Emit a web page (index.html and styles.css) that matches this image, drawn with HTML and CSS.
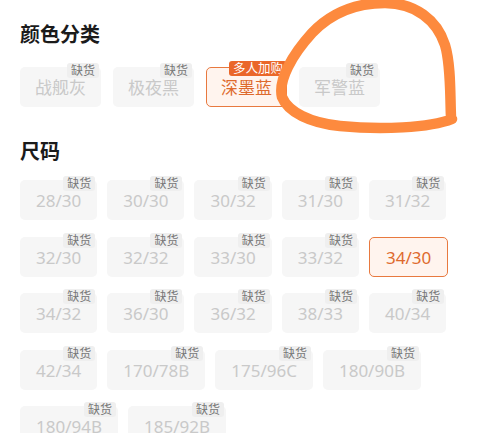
FILE: index.html
```html
<!DOCTYPE html>
<html>
<head>
  <title>选择规格</title>
  <link rel="stylesheet" href="styles.css">
</head>
<body>
  <div class="panel">
    <h2 class="sec-title">颜色分类</h2>
    <div class="chips colors">
      <div class="chip off">战舰灰<span class="tag">缺货</span></div>
      <div class="chip off">极夜黑<span class="tag">缺货</span></div>
      <div class="chip on">深墨蓝<span class="tag hot">多人加购</span></div>
      <div class="chip off">军警蓝<span class="tag">缺货</span></div>
    </div>

    <h2 class="sec-title size-title">尺码</h2>
    <div class="chips sizes">
      <div class="chip off">28/30<span class="tag">缺货</span></div>
      <div class="chip off">30/30<span class="tag">缺货</span></div>
      <div class="chip off">30/32<span class="tag">缺货</span></div>
      <div class="chip off">31/30<span class="tag">缺货</span></div>
      <div class="chip off">31/32<span class="tag">缺货</span></div>
      <div class="chip off">32/30<span class="tag">缺货</span></div>
      <div class="chip off">32/32<span class="tag">缺货</span></div>
      <div class="chip off">33/30<span class="tag">缺货</span></div>
      <div class="chip off">33/32<span class="tag">缺货</span></div>
      <div class="chip on">34/30</div>
      <div class="chip off">34/32<span class="tag">缺货</span></div>
      <div class="chip off">36/30<span class="tag">缺货</span></div>
      <div class="chip off">36/32<span class="tag">缺货</span></div>
      <div class="chip off">38/33<span class="tag">缺货</span></div>
      <div class="chip off">40/34<span class="tag">缺货</span></div>
      <div class="chip off">42/34<span class="tag">缺货</span></div>
      <div class="chip off">170/78B<span class="tag">缺货</span></div>
      <div class="chip off">175/96C<span class="tag">缺货</span></div>
      <div class="chip off">180/90B<span class="tag">缺货</span></div>
      <div class="chip off">180/94B<span class="tag">缺货</span></div>
      <div class="chip off">185/92B<span class="tag">缺货</span></div>
    </div>
  </div>

  <!-- 手绘圈注 -->
  <svg class="scribble" width="500" height="433" viewBox="0 0 500 433">
    <path d="M452 119 C430 128 380 130 340 126 C310 123 288 112 282 97 C278 80 292 55 312 33 C330 14 355 3 385 3 C415 3 437 20 445 45 C451 65 450 95 451 117"
          fill="none" stroke="#fd8a3e" stroke-width="10.5" stroke-linecap="round" stroke-linejoin="round"/>
  </svg>
</body>
</html>
```

FILE: styles.css
```css
/* 规格选择面板 */
html, body {
  margin: 0;
  padding: 0;
  background: #fff;
  height: 433px;
  overflow: hidden;
}
body {
  font-family: "Noto Sans", "Noto Sans CJK SC", sans-serif;
  position: relative;
}
.panel {
  padding: 21px 20px 0 20px;
}
.sec-title {
  margin: 0;
  font-size: 20px;
  line-height: 28px;
  font-weight: bold;
  color: #1b1b1b;
}
.size-title {
  margin-top: 31px;
}
.chips {
  display: flex;
  flex-wrap: wrap;
}
.colors {
  margin-top: 18px;
  gap: 12px;
}
.sizes {
  margin-top: 14px;
  column-gap: 10px;
  row-gap: 16.5px;
}
.chip {
  position: relative;
  box-sizing: border-box;
  height: 40px;
  min-width: 77px;
  padding: 2px 16px 0 16px;
  display: flex;
  align-items: center;
  justify-content: center;
  border-radius: 5px;
  font-size: 17px;
  line-height: 20px;
  white-space: nowrap;
}
.colors .chip {
  min-width: 81px;
  padding: 2px 14px 0 14px;
}
.chip.off {
  background: #f6f6f6;
  color: #c9c9c9;
}
.chip.on {
  background: #fff4ee;
  border: 1.5px solid #e8793f;
  color: #de6a2d;
}
.tag {
  position: absolute;
  top: -4px;
  right: 2px;
  font-size: 12px;
  line-height: 15px;
  padding: 0 4px;
  background: #efefef;
  color: #777;
  border-radius: 3px;
}
.tag.hot {
  top: -7px;
  right: -1px;
  font-size: 12.5px;
  padding: 0 4px;
  background: #ea672a;
  color: #fff;
  border-radius: 3px 3px 0 3px;
}
.scribble {
  position: absolute;
  left: 0;
  top: 0;
  pointer-events: none;
}
```
